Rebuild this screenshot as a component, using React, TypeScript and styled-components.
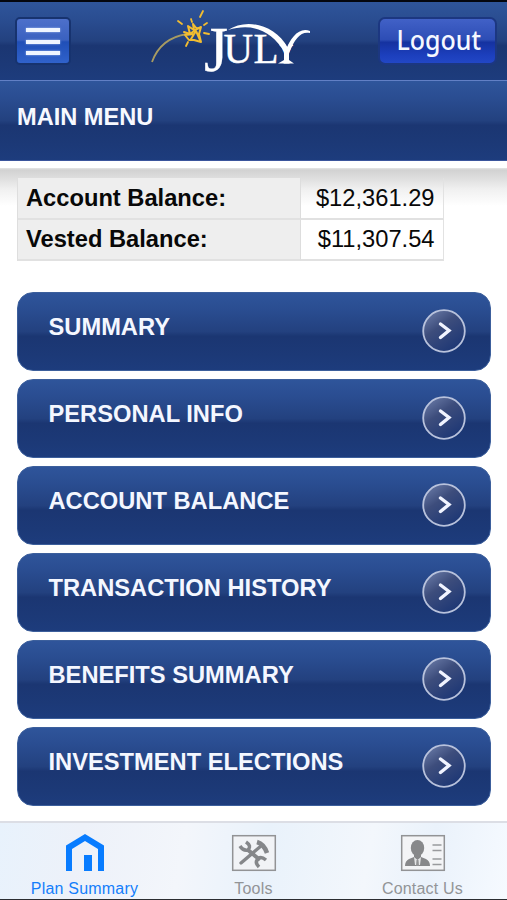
import React from 'react';
import styled, { createGlobalStyle, css } from 'styled-components';

const Global = createGlobalStyle`
  * { box-sizing: border-box; }
  body { margin: 0; background: #fff; font-family: 'Liberation Sans', Arial, sans-serif; }
`;

const navy = css`
  background: linear-gradient(180deg, #2f559b 0%, #2a4d91 22%, #23417f 50%, #1b3672 56%, #1c3977 80%, #1d3c7d 100%);
`;

const Screen = styled.main`
  width: 507px;
  height: 900px;
  display: flex;
  flex-direction: column;
  overflow: hidden;
  background: #fff;
  border-bottom: 1px solid #2b2d31;
`;

const TopBar = styled.header`
  ${navy}
  flex: none;
  height: 80px;
  border-top: 2px solid #04060f;
  padding: 0 10px 0 15px;
  display: flex;
  align-items: center;
  justify-content: space-between;
`;

const MenuButton = styled.button`
  width: 56px;
  height: 48px;
  padding: 9px 9px 8px;
  border: 2px solid #17336f;
  border-radius: 5px;
  background: linear-gradient(180deg, #4d70ca 0%, #3a61c0 48%, #204fb7 52%, #3062cb 100%);
  display: flex;
  flex-direction: column;
  justify-content: space-between;
`;

const MenuLine = styled.span`
  display: block;
  width: 34px;
  height: 4px;
  background: #eff5ff;
  box-shadow: 0 0 2px #b9cdf8;
`;

const Logo = styled.svg`
  display: block;
  width: 180px;
  height: 78px;
  margin-left: 11px;
  overflow: visible;
`;

const LogoutButton = styled.button`
  width: 119px;
  height: 48px;
  padding: 0 0 2px 2px;
  border: 2px solid #1c3781;
  border-radius: 7px;
  background: linear-gradient(180deg, #4161c7 0%, #2d4db5 47%, #1532a0 53%, #1c3fbd 82%, #2247c5 100%);
  color: #f5f8ff;
  font: 500 27px/40px 'Noto Sans', sans-serif;
  display: flex;
  justify-content: center;
  align-items: center;
`;

const LogoutText = styled.span`
  transform: scaleX(0.925);
`;

const TitleBar = styled.h1`
  ${navy}
  flex: none;
  height: 81px;
  margin: 0;
  padding: 22px 17px 0;
  border-top: 1px solid #6280c5;
  border-bottom: 1px solid #3b559c;
  color: #f7f9ff;
  font-size: 23.6px;
  line-height: 28px;
`;

const Content = styled.section`
  flex: none;
  height: 653px;
  margin-top: 7px;
  padding: 10px 16px 0 16.5px;
  background: linear-gradient(180deg, #e5e5e5 0, #d2d2d2 2px, #dcdcdc 9px, #f0f0f0 21px, #fff 38px) no-repeat;
`;

const Balances = styled.dl`
  display: grid;
  grid-template-columns: 283.5px 142.5px;
  width: 427px;
  margin: 0 0 31px;
  border-left: 1px solid #dedede;
  font-size: 23.7px;
  line-height: 28px;
  color: #080808;
`;

const BalanceLabel = styled.dt`
  height: 41.5px;
  padding: 5.5px 8.5px;
  background: #eee;
  border-right: 1px solid #ddd;
  border-bottom: 2px solid #e1e1e1;
  font-weight: 700;
`;

const BalanceValue = styled.dd`
  height: 41.5px;
  margin: 0;
  padding: 5.5px 8px 0 0;
  border-right: 1px solid #e2e2e2;
  border-bottom: 2px solid #e1e1e1;
  text-align: right;
`;

const Menu = styled.nav`
  display: grid;
  gap: 8px;
`;

const MenuItem = styled.button`
  ${navy}
  width: 474.5px;
  height: 79px;
  padding: 0 24.5px 0 31px;
  border: 1px solid #3c5f9c;
  border-radius: 16px;
  display: flex;
  justify-content: space-between;
  align-items: center;
  background-origin: border-box;
  text-align: left;
`;

const MenuText = styled.span`
  color: #f4f7ff;
  font: 700 23.7px/28px 'Liberation Sans', Arial, sans-serif;
  padding-bottom: 10px;
`;

const Arrow = styled.svg`
  width: 44px;
  height: 44px;
  display: block;
  margin-bottom: 2px;
`;

const Tabs = styled.footer`
  flex: 1;
  border-top: 2px solid #dcdee5;
  background: linear-gradient(100deg, #e8f2fc 0%, #edf1f9 16%, #f3f6fb 36%, #e9f2fb 52%, #f3f7fc 72%, #eaf2fb 84%, #f6faff 100%);
  display: grid;
  grid-template-columns: repeat(3, 1fr);
`;

const Tab = styled.div<{ $active?: boolean }>`
  color: ${p => (p.$active ? '#147efb' : '#929497')};
  display: flex;
  flex-direction: column;
  align-items: center;
  padding-top: 8px;
  font-size: 16px;
  line-height: 18px;
  letter-spacing: 0.2px;
`;

const TabIcon = styled.svg`
  width: 46px;
  height: 44px;
  display: block;
  margin-bottom: 5px;
`;

const items = ['SUMMARY', 'PERSONAL INFO', 'ACCOUNT BALANCE', 'TRANSACTION HISTORY', 'BENEFITS SUMMARY', 'INVESTMENT ELECTIONS'];

function JulyLogo() {
  return (
    <Logo viewBox="140 2 180 78" aria-label="July">
      <path d="M152 62C157 48 168 37 187 34" fill="none" stroke="#a79b62" strokeWidth="1.8" />
      <g fill="none" stroke="#f3bd30" strokeLinecap="round" strokeLinejoin="round">
        <path d="M184 32L190 34L188 26L194 30L193 24L197 29L201 27L199 34L201 42L194 40L189 40L185 35L194 34M190 34L198 28M191 39L196 31L200 40" strokeWidth="2" />
        <path d="M200 17L203 11M192 22L191 19M178 21L182 24M204 33L209 34M186 46L188 42M204 25L207 23" strokeWidth="1.8" />
      </g>
      <g fill="#fff" stroke="#fff" fontFamily="'Liberation Serif', serif">
        <text x="204" y="71" fontSize="64" strokeWidth="0.3" textLength="24" lengthAdjust="spacingAndGlyphs">J</text>
        <text x="223.5" y="63" fontSize="42" strokeWidth="0.4" textLength="29.5" lengthAdjust="spacingAndGlyphs">U</text>
        <text x="253.5" y="63" fontSize="42" strokeWidth="0.4" textLength="25" lengthAdjust="spacingAndGlyphs">L</text>
        <text x="280" y="63" fontSize="27" strokeWidth="0.8" textLength="13" lengthAdjust="spacingAndGlyphs">Y</text>
      </g>
      <g fill="#fff">
        <path d="M228 30C246 18 275 24 288 48L285 53C271 29 251 23 228 30Z" />
        <path d="M285 52C291 37 299 27 310 31V33C301 31 295 38 289 53Z" />
        <path d="M284 50H289V60L294 63.5H278L284 60Z" />
      </g>
    </Logo>
  );
}

function ArrowIcon() {
  return (
    <Arrow viewBox="0 0 44 44">
      <defs>
        <linearGradient id="disc" x1="0" y1="0" x2=".7" y2="1">
          <stop offset="0" stopColor="#7384b0" />
          <stop offset=".45" stopColor="#3d4d7c" />
          <stop offset="1" stopColor="#1d3775" />
        </linearGradient>
      </defs>
      <circle cx="22" cy="22" r="20.8" fill="url(#disc)" stroke="#b8c2dc" strokeWidth="1.8" />
      <path d="M18.5 15L27 21.5L18.5 28.5" fill="none" stroke="#f1f4ff" strokeWidth="3.4" strokeLinecap="round" />
    </Arrow>
  );
}

function HomeIcon() {
  return (
    <TabIcon viewBox="0 0 46 44" fill="#087cff">
      <path d="M4 40V14.5L23 3L42 14.5V40H36V18L23 10L10 18V40Z" />
      <path d="M22 24H30V40H22Z" />
    </TabIcon>
  );
}

function ToolsIcon() {
  return (
    <TabIcon viewBox="0 0 46 44">
      <rect x="1.7" y="4.7" width="42.6" height="34.6" fill="#f1f3f6" stroke="#929395" strokeWidth="1.5" />
      <g fill="none" stroke="#85878a">
        <path d="M10 32L30 15" strokeWidth="3.3" strokeLinecap="round" />
        <path d="M26 11Q33 13 36 22" strokeWidth="4.5" />
        <path d="M17 19L29 29" strokeWidth="4" />
        <path d="M15 11Q21 15 17 19Q12 20 9 15" strokeWidth="3.5" />
        <path d="M35 29Q29 24 26 29Q24 32 28 36" strokeWidth="3.5" />
      </g>
    </TabIcon>
  );
}

function ContactIcon() {
  return (
    <TabIcon viewBox="0 0 46 44">
      <rect x="1.7" y="4.7" width="42.6" height="34.6" fill="#f3f4f6" stroke="#929395" strokeWidth="1.5" />
      <ellipse cx="17.5" cy="17" rx="6.7" ry="8" fill="#87888a" />
      <path d="M5 35Q5 30 9 28L14 26L14 23H21V26L26 28Q30 30 30 35Z" fill="#87888a" />
      <path d="M14 26L17.5 29L21 26L20 34H15Z" fill="#e5e6e7" />
      <path d="M16.5 29H18.5L19 35H16Z" fill="#929395" />
      <path d="M32.5 14H41.5M32.5 19.5H41.5M32.5 28H41.5M32.5 33.5H41.5" stroke="#999a9d" strokeWidth="1.5" />
    </TabIcon>
  );
}

export default function App() {
  return (
    <>
      <Global />
      <Screen>
        <TopBar>
          <MenuButton aria-label="Menu"><MenuLine /><MenuLine /><MenuLine /></MenuButton>
          <JulyLogo />
          <LogoutButton><LogoutText>Logout</LogoutText></LogoutButton>
        </TopBar>
        <TitleBar>MAIN MENU</TitleBar>
        <Content>
          <Balances>
            <BalanceLabel>Account Balance:</BalanceLabel><BalanceValue>$12,361.29</BalanceValue>
            <BalanceLabel>Vested Balance:</BalanceLabel><BalanceValue>$11,307.54</BalanceValue>
          </Balances>
          <Menu>
            {items.map(item => <MenuItem key={item}><MenuText>{item}</MenuText><ArrowIcon /></MenuItem>)}
          </Menu>
        </Content>
        <Tabs>
          <Tab $active><HomeIcon />Plan Summary</Tab>
          <Tab><ToolsIcon />Tools</Tab>
          <Tab><ContactIcon />Contact Us</Tab>
        </Tabs>
      </Screen>
    </>
  );
}
